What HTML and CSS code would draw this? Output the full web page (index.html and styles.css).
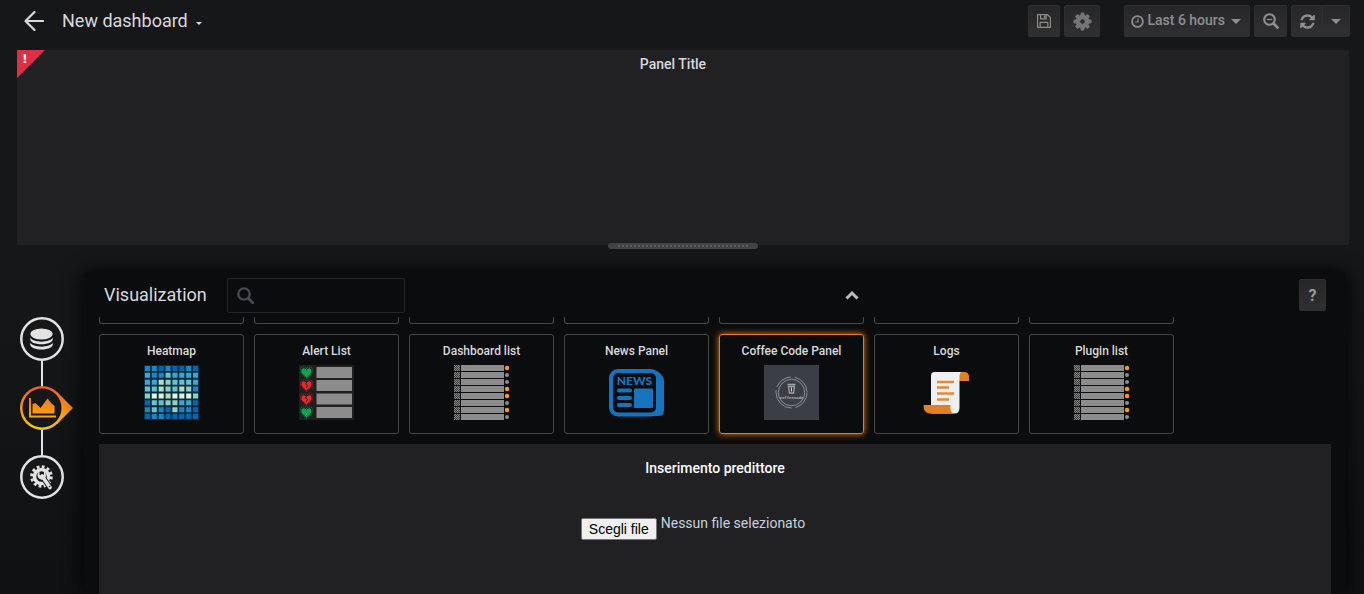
FILE: index.html
```html
<!DOCTYPE html>
<html lang="it">
<head>
<meta charset="utf-8">
<title>New dashboard</title>
<link rel="stylesheet" href="styles.css">
</head>
<body>
<svg class="defs" aria-hidden="true">
  <defs>
    <pattern id="mesh" width="2" height="2" patternUnits="userSpaceOnUse">
      <rect width="2" height="2" fill="#3c3c3c"/>
      <path d="M0 0h1v1h-1zM1 1h1v1h-1z" fill="#858585"/>
    </pattern>
    <linearGradient id="flame" x1="0" y1="0" x2="0" y2="44" gradientUnits="userSpaceOnUse">
      <stop offset="0" stop-color="#f05a28"/>
      <stop offset="1" stop-color="#fbca0a"/>
    </linearGradient>
    <symbol id="rows" viewBox="0 0 55 55">
      <path d="M0 0h6v6H0zM0 7h6v6H0zM0 14h6v6H0zM0 21h6v6H0zM0 28h6v6H0zM0 35h6v6H0zM0 42h6v6H0zM0 49h6v6H0z" fill="url(#mesh)"/>
      <path d="M28.500 0v55" stroke="#8c8c8c" stroke-width="43" stroke-dasharray="6 1"/>
      <g fill="#8e8e8e"><circle cx="53" cy="10" r="2"/><circle cx="53" cy="17" r="2"/><circle cx="53" cy="38" r="2"/><circle cx="53" cy="52" r="2"/></g>
      <g fill="#ff9826"><circle cx="53" cy="3" r="2.200"/><circle cx="53" cy="24" r="2.200"/><circle cx="53" cy="31" r="2.200"/><circle cx="53" cy="45" r="2.200"/></g>
    </symbol>
    <symbol id="heart" viewBox="0 0 12 12">
      <path d="M6 11.500 1 6.500C-1 3.500 1.500.5 4 .8 5 1 5.600 1.600 6 2.200 6.400 1.600 7 1 8 .8 10.500.5 13 3.500 11 6.500z" fill="none" stroke="currentColor" stroke-opacity=".55" stroke-dasharray="1 .7"/>
      <path d="M6 10.500 1.700 6.400C.6 4 2.100 2 4 2.200 5 2.300 5.700 3 6 3.600 6.300 3 7 2.300 8 2.200 9.900 2 11.400 4 10.300 6.400z" fill="currentColor"/>
    </symbol>
  </defs>
</svg>

<header class="navbar">
  <button class="back" aria-label="Back">
    <svg width="20" height="20" viewBox="0 0 20 20"><path d="M19 10H1.500M10.500 1 1.500 10l9 9" fill="none" stroke="#d8d9da" stroke-width="2.200" stroke-linecap="round" stroke-linejoin="round"/></svg>
  </button>
  <button class="title">New dashboard <span class="caret caret-small"></span></button>
  <div class="tools">
    <button class="tool save" aria-label="Save">
      <svg width="14" height="14" viewBox="0 0 14 14" fill="none" stroke="currentColor" stroke-width="1.200"><path d="M.6.6h9.800l3 3v9.800H.6zM3.200 13V8.400h7.600V13M3.600 1v3.800h5.600V1"/><path d="M7.700 1.500v2.500" stroke-width="1.600"/></svg>
    </button>
    <button class="tool settings" aria-label="Settings">
      <svg width="21" height="21" viewBox="0 0 1792 1792" fill="currentColor"><path d="M1090 896q0-80-57-137t-137-57-137 57-57 137 57 137 137 57 137-57 57-137zm574-109v222q0 12-8 23t-20 13l-185 28q-19 54-39 91 35 50 107 138 10 12 10 25t-9 23q-27 37-99 108t-94 71q-12 0-26-9l-138-108q-44 23-91 38-16 136-29 186-7 28-36 28h-222q-14 0-24.500-8.500t-11.500-21.500l-28-184q-49-16-90-37l-141 107q-10 9-25 9-14 0-25-11-126-114-165-168-7-10-7-23 0-12 8-23 15-21 51-66.500t54-70.500q-27-50-41-99l-183-27q-13-2-21-12.500t-8-23.500v-222q0-12 8-23t19-13l186-28q14-46 39-92-40-57-107-138-10-12-10-24 0-10 9-23 26-36 98.500-107.500t94.500-71.500q13 0 26 10l138 107q44-23 91-38 16-136 29-186 7-28 36-28h222q14 0 24.500 8.500t11.500 21.500l28 184q49 16 90 37l142-107q9-9 24-9 13 0 25 10 129 119 165 170 7 8 7 22 0 12-8 23-15 21-51 66.500t-54 70.500q26 50 41 98l183 28q13 2 21 12.500t8 23.500z"/></svg>
    </button>
    <button class="tool time">
      <svg width="13" height="13" viewBox="0 0 13 13" fill="none" stroke="currentColor"><circle cx="6.500" cy="6.500" r="5.400" stroke-width="1.800"/><path d="M7 3.500V7H4.200" stroke-width="1.200"/></svg>
      <span class="time-text">Last 6 hours</span>
      <span class="caret"></span>
    </button>
    <button class="tool zoom" aria-label="Zoom out">
      <svg width="16" height="16" viewBox="0 0 16 16" fill="none" stroke="currentColor"><circle cx="6.500" cy="6.500" r="5.300" stroke-width="2.100"/><path d="M10.500 10.500l4 4" stroke-width="2.600" stroke-linecap="round"/><path d="M3.800 6.500h5.400" stroke-width="1.200"/></svg>
    </button>
    <div class="group">
      <button class="tool refresh" aria-label="Refresh">
        <svg width="17" height="17" viewBox="0 0 1792 1792" fill="currentColor"><path d="M1639 1056q0 5-1 7-64 268-268 434.500t-478 166.500q-146 0-282.500-55t-243.500-157l-129 129q-19 19-45 19t-45-19-19-45v-448q0-26 19-45t45-19h448q26 0 45 19t19 45-19 45l-137 137q71 66 161 102t187 36q134 0 250-65t186-179q11-17 53-117 8-23 30-23h192q13 0 22.500 9.500t9.500 22.500zm25-800v448q0 26-19 45t-45 19h-448q-26 0-45-19t-19-45 19-45l138-138q-148-137-349-137-134 0-250 65t-186 179q-11 17-53 117-8 23-30 23h-199q-13 0-22.500-9.500t-9.500-22.500v-7q65-268 270-434.500t480-166.500q146 0 284 55.500t245 156.500l130-129q19-19 45-19t45 19 19 45z"/></svg>
      </button>
      <button class="tool interval" aria-label="Refresh interval"><span class="caret"></span></button>
    </div>
  </div>
</header>

<section class="panel">
  <span class="alert"><span class="alert-mark">!</span></span>
  <h2 class="panel-title">Panel Title</h2>
  <div class="handle"><span class="handle-dots"></span></div>
</section>

<main class="workspace">
  <nav class="steps">
    <button class="step" aria-label="Queries">
      <svg width="44" height="44" viewBox="0 0 44 44"><circle cx="22" cy="22" r="20.700" fill="#161719" stroke="#e3e3e3" stroke-width="2.500"/><g fill="#e3e3e3"><ellipse cx="21.500" cy="17" rx="11.200" ry="5.500"/><path d="M10.300 20.500c2 5.500 20.400 5.500 22.400 0v2.300c-1.500 6-20.900 6-22.400 0zM10.300 25.600c2 5.500 20.400 5.500 22.400 0v2.300c-1.500 6-20.900 6-22.400 0z"/></g></svg>
    </button>
    <span class="link"></span>
    <button class="step" aria-label="Visualization">
      <svg width="54" height="44" viewBox="0 0 54 44" fill="url(#flame)"><path d="M37 6 53 22 37 38z"/><circle cx="22" cy="22" r="22"/><circle cx="22" cy="22" r="19.500" fill="#161719"/><path d="M9 12h2v17.500h25V31.500H9z"/><path d="M12.500 27.500V18l3-1 5 5 7-9.500 4 5 3 2.500v7.500z"/></svg>
    </button>
    <span class="link"></span>
    <button class="step" aria-label="General">
      <svg width="44" height="44" viewBox="0 0 44 44"><circle cx="22" cy="22" r="20.700" fill="#161719" stroke="#e3e3e3" stroke-width="2.500"/><circle cx="21.500" cy="21.500" r="7" fill="none" stroke="#e3e3e3" stroke-width="3.600"/><circle cx="21.500" cy="21.500" r="9.800" fill="none" stroke="#e3e3e3" stroke-width="3" stroke-dasharray="2.800 2.331"/><path d="M22 21l8 11.500" stroke="#161719" stroke-width="5.600" stroke-linecap="round"/><path d="M22 21l8 11.500" stroke="#e3e3e3" stroke-width="3.600" stroke-linecap="round"/><path d="M19.500 16.300v3.500l2 1.200 2.400-1.600.1-3.200c3.200 2.600 2.400 7.800-1.600 8.400-5 .5-6.600-6-2.900-8.300z" fill="#e3e3e3"/><circle cx="29.500" cy="31.500" r=".8" fill="#161719"/></svg>
    </button>
  </nav>

  <section class="editor">
    <div class="toolbar">
      <h1 class="heading">Visualization</h1>
      <label class="search">
        <svg width="17" height="17" viewBox="0 0 17 17" fill="none" stroke="#464b53"><circle cx="7" cy="7" r="5.700" stroke-width="2.300"/><path d="M11.500 11.500l4.200 4.200" stroke-width="2.700" stroke-linecap="round"/></svg>
        <input class="search-input" type="text" aria-label="Search visualizations">
      </label>
      <button class="collapse" aria-label="Close">
        <svg width="14" height="10" viewBox="0 0 14 10"><path d="M1.500 8.500 7 3l5.500 5.500" fill="none" stroke="#b9bcc0" stroke-width="3"/></svg>
      </button>
      <button class="help">?</button>
    </div>

    <div class="cards stubs"><span class="stub"></span><span class="stub"></span><span class="stub"></span><span class="stub"></span><span class="stub"></span><span class="stub"></span><span class="stub"></span></div>
    <div class="cards">
      <button class="card">Heatmap
        <svg class="art" viewBox="0 0 8 8" fill="none">
          <path stroke="#3ba7cf" d="M0 .5h8M0 1.500h8M0 2.500h8M0 3.500h8M0 4.500h8M0 5.500h8M0 6.500h8M0 7.500h8"/>
          <path stroke="#0565ac" d="M2 .5h1M4 .5h2M7 .5h1M0 5.500h1M7 5.500h1M3 6.500h1M7 6.500h1M0 7.500h1M3 7.500h5"/>
          <path stroke="#1c85c2" d="M0 .5h2M3 .5h1M6 .5h1M1 1.500h2M7 3.500h1M0 6.500h1M2 6.500h1M5 6.500h2M1 7.500h2"/>
          <path stroke="#64c2cb" d="M3 1.500h1M4 2.500h3M0 3.500h2M4 3.500h1M1 5.500h2M4 5.500h1M1 6.500h1"/>
          <path stroke="#8fd1bb" d="M3 2.500h1M3 3.500h1M6 3.500h1M0 4.500h1M7 4.500h1M3 5.500h2M4 6.500h1"/>
          <path stroke="#b3deb8" d="M2 2.500h1M2 3.500h1M5 3.500h1M3 4.500h1"/>
          <path stroke="#e2f2de" d="M1 4.500h2M4 4.500h3"/>
          <path stroke="#0a2a40" stroke-width=".26" d="M0 0h8M0 1h8M0 2h8M0 3h8M0 4h8M0 5h8M0 6h8M0 7h8M0 8h8M0 0v8M1 0v8M2 0v8M3 0v8M4 0v8M5 0v8M6 0v8M7 0v8M8 0v8"/>
        </svg>
      </button>
      <button class="card">Alert List
        <svg class="art" viewBox="0 0 55 55">
          <rect width="55" height="55" fill="#1f1f20"/>
          <path d="M17.500 7.500h35.500M17.500 20.500h35.500M17.500 34h35.500M17.500 47.500h35.500" stroke="#8c8c8c" stroke-width="11"/>
          <g color="#0da64f"><use href="#heart" x="1" y="1" width="13" height="13"/><use href="#heart" x="1" y="41" width="13" height="13"/></g>
          <g color="#ee2529"><use href="#heart" x="1" y="14" width="13" height="13"/><use href="#heart" x="1" y="28" width="13" height="13"/></g>
          <path d="M8 16l-1.500 3 2 1.500-1.200 2.500M8 30l-1.500 3 2 1.500-1.200 2.500" fill="none" stroke="#1f1f20"/>
        </svg>
      </button>
      <button class="card">Dashboard list
        <svg class="art"><use href="#rows"/></svg>
      </button>
      <button class="card">News Panel
        <svg class="art" viewBox="0 0 55 55">
          <path d="M42 6h6c4 3 7 6 7 9v30q0 6-6 6H12z" fill="#1674bf"/>
          <rect x="2" y="6" width="47" height="43.500" rx="7" fill="#0b0c0e" stroke="#1674bf" stroke-width="4"/>
          <text x="25.500" y="20" text-anchor="middle" class="news-text">NEWS</text>
          <path d="M10 25.500h11M10 33h11M10 40h11" stroke="#1674bf" stroke-width="4" stroke-linecap="round"/>
          <rect x="25" y="23.500" width="19" height="19.500" rx="1" fill="#1674bf"/>
        </svg>
      </button>
      <button class="card selected">Coffee Code Panel
        <svg class="art" viewBox="0 0 55 55" fill="none" stroke="#a0a3a8">
          <rect width="55" height="55" fill="#3b3e46" stroke="none"/>
          <circle cx="27.500" cy="27.500" r="13.200" stroke-width=".8"/>
          <circle cx="27.500" cy="27.500" r="15.500" stroke-width=".8" stroke-dasharray="20 4 27 3 18 4"/>
          <path d="M23.500 19.500h8M24.500 21.500l1 6.500h4l1-6.500z" stroke-width="1.300"/>
          <path d="M27.500 22.500v4" stroke="#d5d6d8"/>
          <text x="27.500" y="34" text-anchor="middle" class="coffee-text">CoffeeCode</text>
        </svg>
      </button>
      <button class="card">Logs
        <svg class="art" viewBox="-4 0 55 55">
          <path d="M33 7h8q5 0 5 5v4h-9.500z" fill="#e67e22"/>
          <path d="M11.500 7H38q-1.500 1.500-1.500 4.500V43q0 5.500-5 5.500H8V10.500Q8 7 11.500 7z" fill="#ecf0f1"/>
          <path d="M.5 40H27.500v4q0 4 4 4.500H6.500Q.5 48 .5 40z" fill="#e67e22"/>
          <path d="M14 17h17M14 22.500h12M14 28.500h17M14 34.500h12" stroke="#e08a3c" stroke-width="2.400"/>
        </svg>
      </button>
      <button class="card">Plugin list
        <svg class="art"><use href="#rows"/></svg>
      </button>
    </div>

    <div class="options">
      <h3 class="options-title">Inserimento predittore</h3>
      <div class="file">
        <button class="file-button" type="button" aria-describedby="file-status">Scegli file</button>
        <span class="file-status" id="file-status">Nessun file selezionato</span>
      </div>
    </div>
  </section>
</main>
</body>
</html>
```

FILE: styles.css
```css
* { box-sizing: border-box; }

body {
  margin: 0;
  height: 100vh;
  overflow: hidden;
  display: flex;
  flex-direction: column;
  background: linear-gradient(#161719 260px, #101113);
  color: #d8d9da;
  font-family: Roboto, "Liberation Sans", sans-serif;
  font-size: 14px;
}

button {
  margin: 0;
  padding: 0;
  border: 0;
  background: none;
  color: inherit;
  font: inherit;
}

svg { display: block; flex: none; }
h1, h2, h3 { margin: 0; font-weight: 500; }
.defs { position: absolute; width: 0; height: 0; }

.navbar {
  display: flex;
  align-items: flex-start;
  height: 50px;
  padding: 5px 14px 0 24px;
}
.back { display: flex; align-items: center; height: 32px; }
.title {
  display: flex;
  align-items: center;
  gap: 8px;
  height: 30px;
  margin-left: 18px;
  font-size: 18px;
}
.caret {
  border: 5px solid transparent;
  border-top-color: currentColor;
  border-bottom: 0;
}
.caret-small { border-width: 3px 3px 0; margin-top: 6px; }

.tools { display: flex; gap: 4px; margin-left: auto; }
.tool {
  display: flex;
  align-items: center;
  justify-content: center;
  width: 33px;
  height: 32px;
  border: 1px solid #2f2f32;
  border-radius: 2px;
  background: linear-gradient(#262628, #303032);
  color: #8e8e90;
}
.save { width: 32px; color: #8b8b80; }
.settings { width: 36px; color: #747476; }
.time {
  gap: 3px;
  width: auto;
  margin-left: 20px;
  padding: 0 8px 0 6px;
  font-weight: 500;
}
.time-text { padding-bottom: 2px; margin-right: 3px; }
.group { display: flex; }
.refresh { width: 32px; border-radius: 2px 0 0 2px; }
.interval { width: 27px; border-left: 0; border-radius: 0 2px 2px 0; }

.panel {
  position: relative;
  height: 195px;
  flex: none;
  margin: 0 15px 0 17px;
  background: #212124;
}
.panel-title { padding: 5px 20px 0 0; font-size: 14px; line-height: 18px; text-align: center; }
.alert {
  position: absolute;
  top: 0;
  left: 0;
  border: 14px solid #e02f44;
  border-right-color: transparent;
  border-bottom-color: transparent;
}
.alert-mark {
  position: absolute;
  top: -13px;
  left: -8px;
  color: #fff;
  font: 900 13px/16px Roboto, sans-serif;
}
.handle {
  position: absolute;
  bottom: -4px;
  left: 50%;
  width: 150px;
  height: 6px;
  padding: 2px 10px;
  border-radius: 3px;
  background: #424345;
  transform: translateX(-50%);
}
.handle-dots {
  display: block;
  height: 2px;
  background: repeating-linear-gradient(90deg, #5d5e60 0 2px, transparent 2px 4px);
}

.workspace { display: flex; flex: 1; min-height: 0; padding: 27px 18px 0 20px; }
.steps {
  display: flex;
  flex-direction: column;
  align-items: flex-start;
  width: 64px;
  padding-top: 45px;
}
.link { width: 2px; height: 25px; margin-left: 21px; background: #e3e3e3; }

.editor {
  display: flex;
  flex: 1;
  flex-direction: column;
  min-width: 0;
  padding: 6px 15px 0;
  border-radius: 5px;
  background: #0b0c0e;
  box-shadow: 0 0 20px #000;
}
.toolbar {
  display: flex;
  align-items: flex-start;
  height: 35px;
  margin-bottom: 4px;
  padding: 0 5px;
}
.heading { font-size: 18px; font-weight: 400; line-height: 33px; }
.search {
  display: flex;
  align-items: center;
  gap: 8px;
  width: 178px;
  height: 35px;
  margin-left: 20px;
  padding: 0 9px;
  border: 1px solid #262628;
  border-radius: 2px;
}
.search-input {
  flex: 1;
  min-width: 0;
  border: 0;
  outline: 0;
  background: none;
  color: inherit;
  font: inherit;
}
.collapse { margin: 12px auto 0; }
.help {
  width: 27px;
  height: 32px;
  margin-top: 1px;
  border: 1px solid #2f2f32;
  border-radius: 2px;
  background: linear-gradient(#262628, #303032);
  color: #98999b;
  font-size: 16px;
  font-weight: 700;
}

.cards { display: grid; grid-template-columns: repeat(7, 145px); gap: 10px; margin-bottom: 10px; }
.stub { height: 7px; border: 1px solid #464649; border-top: 0; border-radius: 0 0 3px 3px; }
.card {
  display: flex;
  flex-direction: column;
  align-items: center;
  gap: 6px;
  height: 100px;
  padding-top: 8px;
  border: 1px solid #464649;
  border-radius: 3px;
  font-size: 12px;
  font-weight: 500;
  line-height: 16px;
}
.selected { border-color: #eb7b18; box-shadow: 0 0 6px #eb7b18; }
.art { width: 55px; height: 55px; }
.news-text { fill: #1674bf; font: 900 12px Lato, sans-serif; }
.coffee-text { fill: #b4b6ba; stroke: none; font: 700 4px "Liberation Mono", monospace; }

.options {
  display: flex;
  flex: 1;
  flex-direction: column;
  align-items: center;
  padding-top: 14px;
  background: #212124;
}
.options-title { color: #fff; font-size: 14px; line-height: 20px; }
.file {
  display: flex;
  align-items: flex-start;
  gap: 4px;
  margin-top: 36px;
  margin-right: 44px;
}
.file-button {
  height: 22px;
  margin-top: 4px;
  padding: 0 7px;
  border: 1px solid #767676;
  border-radius: 2px;
  background: #efefef;
  color: #000;
  font: 14px "Liberation Sans", Arial, sans-serif;
}
.file-status { color: #c7d0d9; line-height: 18px; }
```
